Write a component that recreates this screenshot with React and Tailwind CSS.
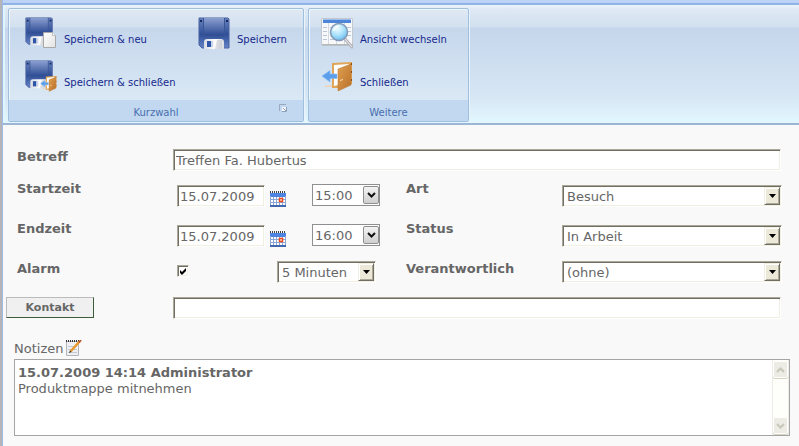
import React, { useState } from 'react';

// Shared frames for the sunken text boxes and selects
const sunken =
  'border border-t-[#aca899] border-l-[#aca899] border-r-white border-b-white shadow-[inset_1px_1px_#716f64,inset_-1px_-1px_#f1efe2] bg-white';

const FloppyShape = () => (
  <>
    <path d="M1 1h29l1 1v29H4l-3-3z" fill="url(#floppyBody)" stroke="#4a61a0" strokeWidth="1" />
    <path d="M5 1h22v18H5z" fill="url(#floppyLabel)" />
    <path d="M5.500 1v18h21V1" fill="none" stroke="#3a5596" strokeWidth="1" />
    <path d="M2 3h2v2H2zM28 3h2v2h-2z" fill="#15295e" />
    <path d="M6 25q0-3 3-3h14q3 0 3 3v7H6z" fill="url(#floppyMetal)" />
    <path d="M9 24h4v6H9z" fill="#2f55a8" />
    <path d="M13 24h2v6h-2z" fill="#c9d3ea" />
    <path d="M19 23h5v9h-7z" fill="#b9bdc6" opacity=".5" />
  </>
);

const Defs = () => (
  <svg width="0" height="0" className="absolute" aria-hidden="true">
    <defs>
      <linearGradient id="floppyBody" x1="0" y1="0" x2="0" y2="1">
        <stop offset="0" stopColor="#6c85c0" />
        <stop offset=".55" stopColor="#2f4f97" />
        <stop offset="1" stopColor="#6683c6" />
      </linearGradient>
      <linearGradient id="floppyLabel" x1="0" y1="0" x2="0" y2="1">
        <stop offset="0" stopColor="#8b9fd0" />
        <stop offset="1" stopColor="#284890" />
      </linearGradient>
      <linearGradient id="floppyMetal" x1="0" y1="0" x2="1" y2="0">
        <stop offset="0" stopColor="#d8dce3" />
        <stop offset=".6" stopColor="#ffffff" />
        <stop offset="1" stopColor="#d6dae1" />
      </linearGradient>
      <linearGradient id="doorWood" x1="0" y1="0" x2="1" y2="1">
        <stop offset="0" stopColor="#e0a050" />
        <stop offset="1" stopColor="#b9702a" />
      </linearGradient>
      <linearGradient id="pageFill" x1="0" y1="0" x2="1" y2="1">
        <stop offset="0" stopColor="#ffffff" />
        <stop offset="1" stopColor="#e2e2e2" />
      </linearGradient>
      <radialGradient id="lens" cx=".4" cy=".3" r=".7">
        <stop offset="0" stopColor="#f0fcff" />
        <stop offset=".6" stopColor="#a6e0fa" />
        <stop offset="1" stopColor="#6dbdf0" />
      </radialGradient>
    </defs>
  </svg>
);

const DoorShape = () => (
  <>
    <path d="M3 26l8-1v2H3z" fill="#efd3b4" />
    <path d="M11 3l20-1v22l-14 4h-6z" fill="#e0a556" />
    <path d="M13 5l15-1v3l-11 3v15l-4 1z" fill="#fff" />
    <path d="M17 9l13-5v21l-13 6z" fill="url(#doorWood)" stroke="#c08038" strokeWidth=".6" />
    <path d="M30.500 3v21" stroke="#8b4f1d" strokeWidth="1" strokeDasharray="2 6" />
    <path d="M19 20l3-1v1l-3 1z" fill="#f7e3b6" />
    <path d="M1 16l8-5.500V14h7v4.500H9V22z" fill="#5b9fec" stroke="#86baf2" strokeWidth=".7" />
  </>
);

const SaveIcon = () => (
  <svg viewBox="0 0 32 32" className="size-8 shrink-0"><FloppyShape /></svg>
);

const SaveNewIcon = () => (
  <svg viewBox="0 0 32 32" className="size-8 shrink-0">
    <g transform="scale(.88)"><FloppyShape /></g>
    <path d="M18.500 15.500h9l3 3v12h-12z" fill="url(#pageFill)" stroke="#a8a8a8" />
    <path d="M27.500 15.500v3h3" fill="#fff" stroke="#bdbdbd" />
  </svg>
);

const SaveCloseIcon = () => (
  <svg viewBox="0 0 32 32" className="size-8 shrink-0">
    <g transform="scale(.88)"><FloppyShape /></g>
    <g transform="translate(15 15) scale(.53)"><DoorShape /></g>
  </svg>
);

const CloseIcon = () => (
  <svg viewBox="0 0 32 32" className="size-8 shrink-0"><DoorShape /></svg>
);

const SwitchViewIcon = () => (
  <svg viewBox="0 0 32 32" className="size-8 shrink-0">
    <path d="M.5 1.500h31v26H.5z" fill="#f7f8fa" stroke="#c3c8d0" />
    <path d="M1 28h31" stroke="#a9a99f" />
    <path d="M2 3h28v3H2z" fill="#4d86d8" />
    <path d="M2 2h28v1H2z" fill="#9dbfee" />
    <path d="M7.500 6v21M15.500 6v21M23.500 6v21" stroke="#d5dae2" />
    <path d="M2 10.500h4M2 14.500h4M2 18.500h4M2 22.500h4M9 10.500h5M9 22.500h5M25 10.500h5M25 14.500h5M25 18.500h5" stroke="#b9c6d8" />
    <path d="M24 22l7 8" stroke="#b4b4ba" strokeWidth="3" strokeLinecap="round" />
    <path d="M24 22l7 8" stroke="#ececf0" strokeWidth="1" />
    <circle cx="18" cy="15" r="8.500" fill="url(#lens)" stroke="#8398b4" strokeWidth="1.500" />
    <path d="M12.500 14a6 6 0 0 1 6-5" fill="none" stroke="#fff" strokeWidth="1.500" />
  </svg>
);

const CalendarIcon = () => (
  <svg viewBox="0 0 16 16" className="block size-4">
    <path d="M0 2h16v14H0z" fill="#fff" />
    <path d="M0 2h16v4H0z" fill="#4f84e0" />
    <path d="M0 1h16" stroke="#444" strokeWidth="2" strokeDasharray="1 1" />
    <path d="M.5 5v11M3.500 6v9M6.500 6v9M9.500 6v9M12.500 6v9M15.500 5v11M0 8.500h16M0 11.500h16" stroke="#8ba6d6" />
    <path d="M0 15h16" stroke="#4468ac" strokeWidth="2" />
    <path d="M9.500 7.500h3v3h-3z" fill="#fff" stroke="#f04a1a" strokeWidth="1.500" />
  </svg>
);

const NoteIcon = () => (
  <svg viewBox="0 0 16 16" className="block size-4">
    <path d="M.5 1.500h12v14H.5z" fill="#eef0f3" stroke="#b3b5b9" />
    <path d="M2 6.500h9M2 9.500h9M2 12.500h9" stroke="#c5cad2" />
    <path d="M0 1h13" stroke="#333" strokeWidth="2" strokeDasharray="1 1" />
    <path d="M13.500 1.500l-9 10" stroke="#e89a2e" strokeWidth="2.500" />
    <path d="M15 0l-2 2.500" stroke="#b7552a" strokeWidth="2" />
    <path d="M3 13l1-2.500 1.500 1.500z" fill="#333" />
  </svg>
);

const RibbonButton = ({ icon, children }) => (
  <button type="button" className="flex items-end gap-[7px] text-left text-[10px] leading-[18px] text-[#15288b] whitespace-nowrap">
    {icon}
    <span>{children}</span>
  </button>
);

const RibbonGroup = ({ title, launcher, className, children }) => (
  <section className={`flex flex-col rounded-xs border border-[#9fbfdf] shadow-[inset_1px_1px_#eef5fc,1px_0_#eaf4fd] bg-[linear-gradient(#dfe9f4_0,#d3e0ef_18px,#c6d7ec_19px,#dae8f5_91px)] ${className}`}>
    <div className="h-[91px] pt-2 pl-4">{children}</div>
    <div className="relative h-[21px] bg-[#c1d8f0] pt-px text-center text-[10px] leading-6 text-[#4a6fae]">
      {title}
      {launcher && (
        <svg viewBox="0 0 8 8" className="absolute right-4 top-1 size-2">
          <path d="M.5 7V.5H7" fill="none" stroke="#9aa9bd" />
          <path d="M3 3h5v5H3z" fill="#f5f9fd" />
          <path d="M4 4l3 3M7.500 3v4.500H3" fill="none" stroke="#8c9fb8" />
        </svg>
      )}
    </div>
  </section>
);

const Label = ({ htmlFor, children }) => (
  <label htmlFor={htmlFor} className="pt-px font-bold leading-4">{children}</label>
);

const TextBox = ({ className, ...props }) => (
  <input type="text" className={`block h-[22px] px-[2px] pt-px outline-none ${sunken} ${className}`} {...props} />
);

const ClassicSelect = ({ id, options, className, label }) => (
  <div className={`relative h-[22px] ${className}`}>
    <select id={id} aria-label={label} className={`block size-full appearance-none pl-1 pt-px outline-none ${sunken}`}>
      {options.map((o) => <option key={o}>{o}</option>)}
    </select>
    <span className="pointer-events-none absolute right-[2px] top-[2px] flex h-[18px] w-4 items-center justify-center border border-t-[#f1efe2] border-l-[#f1efe2] border-r-[#716f64] border-b-[#716f64] bg-[#ece9d8] shadow-[inset_1px_1px_#fff,inset_-1px_-1px_#aca899]">
      <svg viewBox="0 0 7 4" className="h-1 w-[7px]"><path d="M0 0h7L3.500 4z" fill="#000" /></svg>
    </span>
  </div>
);

const TimeSelect = ({ label, options }) => (
  <div className="relative h-[22px] w-[68px]">
    <select aria-label={label} className="block size-full appearance-none border border-[#8f8f8f] bg-white pl-[2px] pt-px outline-none">
      {options.map((o) => <option key={o}>{o}</option>)}
    </select>
    <span className="pointer-events-none absolute right-px top-[2px] flex h-[18px] w-4 items-center justify-center rounded-xs border border-[#8f8f8f] bg-linear-to-b from-[#f4f4f4] to-[#cfcfcf]">
      <svg viewBox="0 0 9 6" className="h-[6px] w-[9px]"><path d="M1 1l3.500 3.500L8 1" fill="none" stroke="#111" strokeWidth="2" /></svg>
    </span>
  </div>
);

const DateTime = ({ id, name, date, time }) => (
  <div className="flex items-start pt-1 pl-1">
    <div className="flex w-[135px] items-end gap-[5px] pt-px">
      <TextBox id={id} defaultValue={date} className="w-[88px]" />
      <button type="button" aria-label={`${name}: Kalender`}><CalendarIcon /></button>
    </div>
    <TimeSelect label={`${name}: Uhrzeit`} options={time} />
  </div>
);

const ScrollButton = ({ label, d }) => (
  <button type="button" aria-label={label} className="flex h-[17px] w-[15px] items-center justify-center rounded-xs border border-white bg-[#ecebe4] shadow-[0_1px_#d5d3c0]">
    <svg viewBox="0 0 9 6" className="h-[6px] w-[9px]"><path d={d} fill="none" stroke="#c9c7ba" strokeWidth="2" /></svg>
  </button>
);

const App = () => {
  const [alarm, setAlarm] = useState(true);

  return (
    <div className="flex min-h-screen bg-[#f9f9f9] font-['DejaVu_Sans',Verdana,sans-serif] text-[13px] text-[#666]">
      <Defs />
      {/* Edge of the window behind */}
      <div className="w-[3px] shrink-0 border-r border-[#9dbbe3] bg-[#b5b5b9]" />

      <div className="min-w-0 flex-1">
        <div className="h-[5px] border-b-2 border-[#8fb3e6] bg-[#bcd3f5]" />

        {/* Ribbon */}
        <header className="flex gap-1 border-b-2 border-[#9cb6d4] bg-[linear-gradient(#eef4fb_0,#dfe9f5_4px,#d1dfee_22px,#c5d6ec_23px,#d6e6f4_90px,#e2f7ff_118px)] pt-[3px] pb-px pl-[5px] shadow-[inset_2px_0_#dff5ff]">
          <RibbonGroup title="Kurzwahl" launcher className="w-[296px]">
            <div className="grid grid-cols-[173px_auto] justify-start gap-y-[11px]">
              <RibbonButton icon={<SaveNewIcon />}>Speichern &amp; neu</RibbonButton>
              <RibbonButton icon={<SaveIcon />}>Speichern</RibbonButton>
              <RibbonButton icon={<SaveCloseIcon />}>Speichern &amp; schließen</RibbonButton>
            </div>
          </RibbonGroup>
          <RibbonGroup title="Weitere" className="w-[161px]">
            <div className="-ml-1 flex flex-col gap-[11px]">
              <RibbonButton icon={<SwitchViewIcon />}>Ansicht wechseln</RibbonButton>
              <RibbonButton icon={<CloseIcon />}>Schließen</RibbonButton>
            </div>
          </RibbonGroup>
        </header>

        <form className="pt-[23px]" onSubmit={(e) => e.preventDefault()}>
          <div className="grid grid-cols-[156px_233px_156px_1fr] grid-rows-[32px_40px_40px_36px_36px] pl-[14px] pr-[17px]">
            <Label htmlFor="betreff">Betreff</Label>
            <div className="col-span-3 pt-px pr-px">
              <TextBox id="betreff" defaultValue="Treffen Fa. Hubertus" className="w-full" />
            </div>

            <Label htmlFor="start">Startzeit</Label>
            <DateTime id="start" name="Startzeit" date="15.07.2009" time={['15:00', '15:30', '16:00']} />
            <Label htmlFor="art">Art</Label>
            <div className="pt-[5px]"><ClassicSelect id="art" options={['Besuch', 'Telefonat']} className="w-full" /></div>

            <Label htmlFor="ende">Endzeit</Label>
            <DateTime id="ende" name="Endzeit" date="15.07.2009" time={['16:00', '16:30', '17:00']} />
            <Label htmlFor="status">Status</Label>
            <div className="pt-[5px]"><ClassicSelect id="status" options={['In Arbeit', 'Erledigt']} className="w-full" /></div>

            <Label htmlFor="alarm">Alarm</Label>
            <div className="flex items-start pt-px pl-1">
              <div className="relative mt-1 mr-[88px] size-3">
                <input
                  id="alarm"
                  type="checkbox"
                  checked={alarm}
                  onChange={(e) => setAlarm(e.target.checked)}
                  className={`block size-3 appearance-none ${sunken}`}
                />
                {alarm && (
                  <svg viewBox="0 0 12 12" className="pointer-events-none absolute inset-0 size-3">
                    <path d="M3 5l2 2 4-4v3L5 10 3 8z" fill="#000" />
                  </svg>
                )}
              </div>
              <ClassicSelect label="Alarm: Vorlauf" options={['5 Minuten', '10 Minuten']} className="w-[99px]" />
            </div>
            <Label htmlFor="verantwortlich">Verantwortlich</Label>
            <div className="pt-px"><ClassicSelect id="verantwortlich" options={['(ohne)', 'Administrator']} className="w-full" /></div>

            <div className="-ml-[11px] pt-px">
              <button type="button" className="block h-[21px] w-[88px] border border-t-[#bbb] border-l-[#bbb] border-r-[#3a5f3a] border-b-[#3a5f3a] bg-[#f0f0f0] text-[11px] font-bold leading-4">
                Kontakt
              </button>
            </div>
            <div className="col-span-3 pt-px pr-px">
              <TextBox aria-label="Kontakt" className="w-full" />
            </div>
          </div>

          {/* Notes */}
          <div className="pt-2 pl-[11px] pr-[9px]">
            <div className="flex h-[19px] items-start gap-[3px] leading-[18px]">
              <span>Notizen</span>
              <button type="button" aria-label="Notiz bearbeiten"><NoteIcon /></button>
            </div>
            <div className="flex h-[77px] border border-[#a5a5a5] bg-white">
              <div className="flex-1 pt-[5px] pl-[3px] leading-4">
                <p className="font-bold">15.07.2009 14:14 Administrator</p>
                <p>Produktmappe mitnehmen</p>
              </div>
              <div className="flex w-[17px] flex-col items-center justify-between border-x border-[#eeede5] bg-[#fefefa] py-px">
                <ScrollButton label="Nach oben" d="M1 5l3.500-3.500L8 5" />
                <ScrollButton label="Nach unten" d="M1 1l3.500 3.500L8 1" />
              </div>
            </div>
          </div>
        </form>
      </div>
    </div>
  );
};

export default App;
